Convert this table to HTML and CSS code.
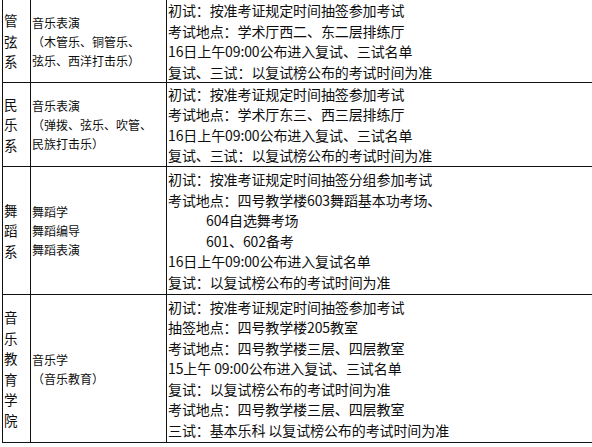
FILE: index.html
```html
<!DOCTYPE html>
<html lang="zh-CN">
<head>
<meta charset="utf-8">
<link rel="stylesheet" href="styles.css">
</head>
<body>
<table class="exam">
  <colgroup>
    <col class="c-dept">
    <col class="c-major">
    <col class="c-info">
  </colgroup>
  <tr class="r1">
    <td class="dept">管<br>弦<br>系</td>
    <td class="major">音乐表演<br>（木管乐、铜管乐、<br>弦乐、西洋打击乐）</td>
    <td class="info">初试<span class="colon">：</span>按准考证规定时间抽签参加考试<br>考试地点<span class="colon">：</span>学术厅西二、东二层排练厅<br>16日上午09:00公布进入复试、三试名单<br>复试、三试<span class="colon">：</span>以复试榜公布的考试时间为准</td>
  </tr>
  <tr class="r2">
    <td class="dept">民<br>乐<br>系</td>
    <td class="major">音乐表演<br>（弹拨、弦乐、吹管、<br>民族打击乐）</td>
    <td class="info">初试<span class="colon">：</span>按准考证规定时间抽签参加考试<br>考试地点<span class="colon">：</span>学术厅东三、西三层排练厅<br>16日上午09:00公布进入复试、三试名单<br>复试、三试<span class="colon">：</span>以复试榜公布的考试时间为准</td>
  </tr>
  <tr class="r3">
    <td class="dept">舞<br>蹈<br>系</td>
    <td class="major">舞蹈学<br>舞蹈编导<br>舞蹈表演</td>
    <td class="info">初试<span class="colon">：</span>按准考证规定时间抽签分组参加考试<br>考试地点<span class="colon">：</span>四号教学楼603舞蹈基本功考场、<br><span class="indent">604自选舞考场</span><br><span class="indent">601、602备考</span><br>16日上午09:00公布进入复试名单<br>复试<span class="colon">：</span>以复试榜公布的考试时间为准</td>
  </tr>
  <tr class="r4">
    <td class="dept">音<br>乐<br>教<br>育<br>学<br>院</td>
    <td class="major">音乐学<br>（音乐教育）</td>
    <td class="info">初试<span class="colon">：</span>按准考证规定时间抽签参加考试<br>抽签地点<span class="colon">：</span>四号教学楼205教室<br>考试地点<span class="colon">：</span>四号教学楼三层、四层教室<br>15上午 09:00公布进入复试、三试名单<br>复试<span class="colon">：</span>以复试榜公布的考试时间为准<br>考试地点<span class="colon">：</span>四号教学楼三层、四层教室<br>三试<span class="colon">：</span>基本乐科 以复试榜公布的考试时间为准</td>
  </tr>
</table>
</body>
</html>
```
FILE: styles.css
```css
html, body {
  margin: 0;
  padding: 0;
  background: #fff;
  overflow: hidden;
}
body {
  width: 592px;
  height: 447px;
  font-family: "Noto Sans CJK SC", "Noto Sans", sans-serif;
  color: #0e0e0e;
}
.exam {
  margin: -1px 0 0 2px;
  width: 592px;
  table-layout: fixed;
  border-collapse: separate;
  border-spacing: 0;
  border-top: 1px solid #111;
}
.c-dept { width: 28px; }
.c-major { width: 136px; }
.exam td {
  box-sizing: border-box;
  border-left: 1px solid #111;
  border-bottom: 1px solid #111;
  padding: 0 0 0 1px;
  vertical-align: middle;
  white-space: nowrap;
  overflow: hidden;
}
.r1 td { height: 83px; }
.r2 td { height: 84px; }
.r3 td { height: 128px; }
.r4 td { height: 148px; }
.dept {
  font-size: 13.5px;
  line-height: 20.5px;
  padding-left: 1px;
}
.major {
  font-size: 12px;
  line-height: 19px;
  padding-left: 1px;
}
.info {
  font-size: 14px;
  line-height: 20.5px;
  letter-spacing: -0.1px;
}
.colon {
  font-family: "Noto Sans CJK TC", "Noto Sans CJK SC", sans-serif;
}
.indent {
  padding-left: 38px;
}
```
